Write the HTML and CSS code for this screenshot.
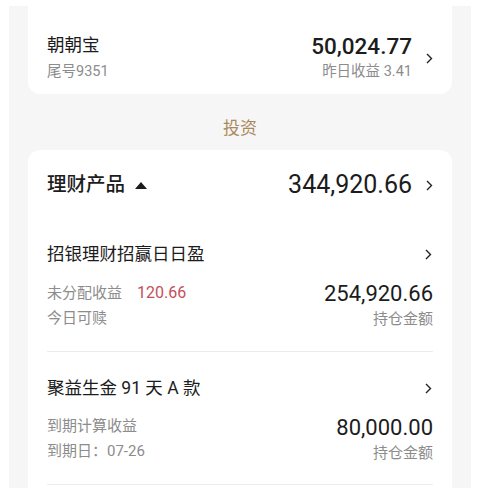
FILE: index.html
```html
<!DOCTYPE html>
<html lang="zh-CN">
<head>
    <meta charset="UTF-8">
    <meta name="viewport" content="width=device-width, initial-scale=1.0">
    <title>资产</title>
    <link rel="stylesheet" href="styles.css">
</head>
<body>
    <div class="page">
        <div class="card card-top">
            <div class="row">
                <div class="col">
                    <div class="name">朝朝宝</div>
                    <div class="sub">尾号9351</div>
                </div>
                <div class="col right">
                    <div class="amount bold">50,024.77</div>
                    <div class="sub">昨日收益 3.41</div>
                </div>
                <svg class="chevron" width="7" height="11" viewBox="0 0 7 11"><polyline points="1,1 5.5,5.5 1,10" /></svg>
            </div>
        </div>

        <div class="section-title">投资</div>

        <div class="card card-list">
            <div class="group-head">
                <div class="group-name">理财产品
                    <svg class="caret" width="12" height="7" viewBox="0 0 12 7"><polygon points="6,0 12,7 0,7" /></svg>
                </div>
                <div class="group-amount">344,920.66</div>
                <svg class="chevron" width="7" height="11" viewBox="0 0 7 11"><polyline points="1,1 5.5,5.5 1,10" /></svg>
            </div>

            <div class="item">
                <div class="item-head">
                    <span>招银理财招赢日日盈</span>
                    <svg class="chevron" width="7" height="11" viewBox="0 0 7 11"><polyline points="1,1 5.5,5.5 1,10" /></svg>
                </div>
                <div class="detail">
                    <div class="col">
                        <div class="line">未分配收益<span class="red">120.66</span></div>
                        <div class="line">今日可赎</div>
                    </div>
                    <div class="col right">
                        <div class="amount">254,920.66</div>
                        <div class="line">持仓金额</div>
                    </div>
                </div>
            </div>

            <div class="item">
                <div class="item-head">
                    <span>聚益生金 91 天 A 款</span>
                    <svg class="chevron" width="7" height="11" viewBox="0 0 7 11"><polyline points="1,1 5.5,5.5 1,10" /></svg>
                </div>
                <div class="detail">
                    <div class="col">
                        <div class="line">到期计算收益</div>
                        <div class="line">到期日：07-26</div>
                    </div>
                    <div class="col right">
                        <div class="amount">80,000.00</div>
                        <div class="line">持仓金额</div>
                    </div>
                </div>
            </div>
        </div>
    </div>
</body>
</html>
```

FILE: styles.css
```css
body, html {
    margin: 0;
    padding: 0;
    background-color: #fff;
    font-family: Roboto, "Noto Sans CJK SC", sans-serif;
    color: #1c1c1c;
    height: 488px;
    overflow: hidden;
}
.page {
    margin: 6px 9px 0;
    padding: 0 19px;
    background-color: #f6f6f6;
    height: 482px;
    overflow: hidden;
}
.card {
    background-color: #fff;
    border-radius: 12px;
    padding: 0 19px;
}
.card-top {
    border-radius: 0 0 12px 12px;
    padding-top: 27px;
    padding-bottom: 11px;
}
.card-list {
    border-radius: 12px 12px 0 0;
    height: 345px;
    box-sizing: border-box;
}
.row {
    display: flex;
    align-items: center;
}
.col {
    display: flex;
    flex-direction: column;
}
.row .col:first-child {
    flex: 1;
}
.right {
    align-items: flex-end;
}
.name {
    font-size: 17.5px;
    line-height: 24px;
}
.sub {
    font-size: 14.5px;
    line-height: 22px;
    margin-top: 4px;
    color: #8c8c8c;
}
.right .sub {
    margin-top: 2px;
}
.amount {
    font-size: 22px;
    line-height: 28px;
}
.amount.bold {
    font-size: 22.5px;
    font-weight: 500;
    line-height: 26px;
}
.chevron {
    fill: none;
    stroke: #222;
    stroke-width: 1.4;
    margin-left: 14px;
    flex: none;
}
.section-title {
    text-align: center;
    color: #a88a5c;
    font-size: 17px;
    line-height: 24px;
    padding: 22px 0 10px;
}
.group-head {
    display: flex;
    align-items: center;
    padding: 23px 0 21px;
}
.group-name {
    flex: 1;
    font-size: 19.5px;
    font-weight: 500;
    line-height: 24px;
    display: flex;
    align-items: center;
}
.caret {
    margin-left: 10px;
    fill: #1c1c1c;
}
.group-amount {
    font-size: 25px;
    line-height: 24px;
}
.item {
    padding: 24px 0 20px;
    border-bottom: 1px solid #ececec;
}
.item-head {
    display: flex;
    justify-content: space-between;
    align-items: center;
    font-size: 17.5px;
    line-height: 24px;
}
.item-head .chevron {
    margin-right: 1px;
}
.detail {
    display: flex;
    justify-content: space-between;
    margin-top: 14px;
}
.line {
    font-size: 15px;
    line-height: 25px;
    color: #8c8c8c;
}
.right .line {
    line-height: 22px;
}
.red {
    color: #c4505a;
    font-size: 16px;
    margin-left: 15px;
}
```
